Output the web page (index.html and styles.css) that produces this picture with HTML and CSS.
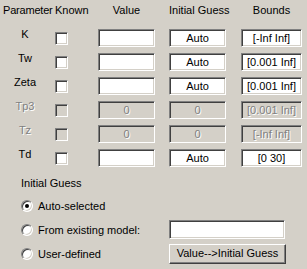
FILE: index.html
```html
<!DOCTYPE html>
<html>
<head>
<meta charset="utf-8">
<link rel="stylesheet" href="styles.css">
</head>
<body>
<div class="panel">
  <div class="params">
    <div class="hd hd-param">Parameter</div>
    <div class="hd hd-known">Known</div>
    <div class="hd hd-c57">Value</div>
    <div class="hd hd-c57">Initial Guess</div>
    <div class="hd hd-c61">Bounds</div>

    <div class="lbl">K</div>
    <div class="chk"></div>
    <div class="field w57"></div>
    <div class="field w57">Auto</div>
    <div class="field w61">[-Inf Inf]</div>

    <div class="lbl">Tw</div>
    <div class="chk"></div>
    <div class="field w57"></div>
    <div class="field w57">Auto</div>
    <div class="field w61">[0.001 Inf]</div>

    <div class="lbl">Zeta</div>
    <div class="chk"></div>
    <div class="field w57"></div>
    <div class="field w57">Auto</div>
    <div class="field w61">[0.001 Inf]</div>

    <div class="lbl dis">Tp3</div>
    <div class="chk off"></div>
    <div class="field w57 off">0</div>
    <div class="field w57 off">0</div>
    <div class="field w61 off">[0.001 Inf]</div>

    <div class="lbl dis">Tz</div>
    <div class="chk off"></div>
    <div class="field w57 off">0</div>
    <div class="field w57 off">0</div>
    <div class="field w61 off">[-Inf Inf]</div>

    <div class="lbl">Td</div>
    <div class="chk"></div>
    <div class="field w57"></div>
    <div class="field w57">Auto</div>
    <div class="field w61">[0 30]</div>
  </div>

  <div class="guess-title">Initial Guess</div>
  <div class="guess">
    <div class="radio"><span class="dot on"></span><span>Auto-selected</span></div>
    <div></div>
    <div class="radio"><span class="dot"></span><span>From existing model:</span></div>
    <div class="field wide"></div>
    <div class="radio"><span class="dot"></span><span>User-defined</span></div>
    <div class="btn">Value--&gt;Initial Guess</div>
  </div>
</div>
</body>
</html>
```

FILE: styles.css
```css
html, body {
  margin: 0;
  padding: 0;
  background: #d4d0c8;
}

.panel {
  width: 307px;
  height: 269px;
  background: #d4d0c8;
  font-family: "Liberation Sans", Arial, sans-serif;
  font-size: 11px;
  line-height: 13px;
  color: #000;
  overflow: hidden;
}

.params {
  display: grid;
  grid-template-columns: 54px 44px 71px 72px 61px;
  grid-template-rows: 23px repeat(6, 18px);
  row-gap: 6px;
}

.hd {
  padding-top: 4px;
  white-space: nowrap;
}

.hd-param {
  padding-left: 3px;
  letter-spacing: -0.2px;
}

.hd-known {
  padding-left: 1px;
}

.hd-c57 {
  width: 57px;
  text-align: center;
}

.hd-c61 {
  width: 61px;
  text-align: center;
}

.lbl {
  width: 50px;
  text-align: center;
  align-self: start;
  margin-top: -1px;
}

.dis {
  color: #808080;
  text-shadow: 1px 1px 0 #fff;
}

.chk {
  width: 13px;
  height: 13px;
  box-sizing: border-box;
  margin-left: 1px;
  align-self: center;
  background: #fff;
  border: 1px solid;
  border-color: #808080 #fff #fff #808080;
  box-shadow: inset 1px 1px 0 #404040, inset -1px -1px 0 #d4d0c8;
}

.chk.off {
  background: #d4d0c8;
}

.field {
  height: 18px;
  box-sizing: border-box;
  background: #fff;
  border: 1px solid;
  border-color: #808080 #fff #fff #808080;
  box-shadow: inset 1px 1px 0 #404040, inset -1px -1px 0 #d4d0c8;
  text-align: center;
  line-height: 16px;
  white-space: nowrap;
}

.field.off {
  background: #d4d0c8;
  color: #808080;
  text-shadow: 1px 1px 0 #fff;
}

.w57 { width: 57px; }
.w61 { width: 61px; }

.guess-title {
  margin-top: 10px;
  padding-left: 21px;
}

.guess {
  display: grid;
  grid-template-columns: 169px 117px;
  grid-auto-rows: 20px;
  row-gap: 4px;
  margin-top: 6px;
}

.radio {
  display: flex;
  align-items: center;
  padding-left: 21px;
  gap: 5px;
  white-space: nowrap;
}

.dot {
  position: relative;
  width: 12px;
  height: 12px;
  box-sizing: border-box;
  border-radius: 50%;
  background: #fff;
  border: 1px solid;
  border-color: #808080 #fff #fff #808080;
  box-shadow: inset 1px 1px 0 #404040, inset -1px -1px 0 #d4d0c8;
  flex: none;
}

.dot.on::after {
  content: "";
  position: absolute;
  left: 3px;
  top: 3px;
  width: 4px;
  height: 4px;
  border-radius: 50%;
  background: #000;
}

.field.wide {
  width: 116px;
  height: 19px;
}

.btn {
  width: 117px;
  height: 20px;
  box-sizing: border-box;
  background: #d4d0c8;
  border: 1px solid;
  border-color: #fff #404040 #404040 #fff;
  box-shadow: inset -1px -1px 0 #808080;
  text-align: center;
  line-height: 17px;
  white-space: nowrap;
}
```
